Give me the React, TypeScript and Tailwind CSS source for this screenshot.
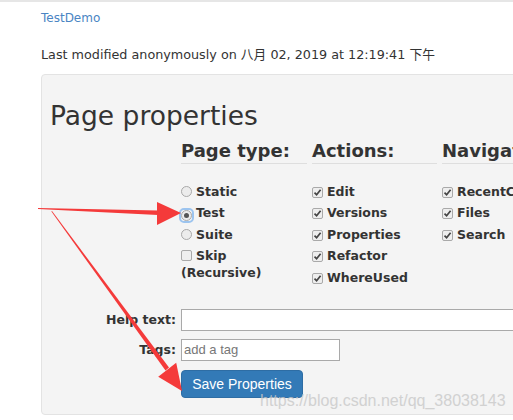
import React from 'react';

function Radio({ checked = false, focused = false }: { checked?: boolean; focused?: boolean }) {
  return (
    <span
      className={`inline-flex items-center justify-center align-[-1px] mr-[4px] w-[11px] h-[11px] rounded-[3px] ${
        focused ? 'outline outline-2 outline-[#9cc4ef]' : ''
      }`}
    >
      <span className="flex items-center justify-center w-[11px] h-[11px] rounded-full border border-[#a9a9a9] bg-[#ececec]">
        {checked && <span className="w-[5px] h-[5px] rounded-full bg-[#555]" />}
      </span>
    </span>
  );
}

function Check({ checked = true }: { checked?: boolean }) {
  return (
    <span className="inline-flex items-center justify-center align-[-1px] mr-[4px] w-[11px] h-[11px] rounded-[2px] border border-[#a9a9a9] bg-[#eeeeee]">
      {checked && (
        <svg width="9" height="9" viewBox="0 0 9 9">
          <path d="M1.5 4.6 L3.6 6.8 L7.6 1.8" fill="none" stroke="#444" strokeWidth="1.7" />
        </svg>
      )}
    </span>
  );
}

const heading = 'text-[18px] leading-[22px] font-bold text-[#333] pb-[1px] border-b border-[#dedede]';
const item = 'text-[12.5px] leading-[17px] font-bold text-[#333]';

export default function App() {
  return (
    <div
      className="relative w-[513px] h-[420px] overflow-hidden bg-white border-t-2 border-[#e6e6e6] text-[#333]"
      style={{ fontFamily: '"DejaVu Sans", Verdana, "Noto Sans CJK SC", sans-serif' }}
    >
      <div className="pl-[41px]">
        <a className="block mt-[7px] text-[12px] leading-[18px] text-[#4a85c3]">TestDemo</a>
        <p className="mt-[19px] text-[12.75px] leading-[18px] text-[#333]">
          Last modified anonymously on 八月 02, 2019 at 12:19:41 下午
        </p>

        {/* properties panel */}
        <div className="mt-[10px] w-[620px] h-[341px] rounded-[4px] border border-[#e3e3e3] bg-[#f4f4f4] pl-[8px] pt-[25px]">
          <h1 className="text-[26.5px] leading-[32px] font-normal text-[#333]">Page properties</h1>

          <div className="flex mt-[8px]">
            <div className="w-[131px] shrink-0" />
            <div className="flex gap-[5px]">
              <div className="w-[126px]">
                <div className={heading}>Page type:</div>
                <div className="mt-[18.5px] flex flex-col gap-[4.5px]">
                  <div className={item}><Radio />Static</div>
                  <div className={item}><Radio checked focused />Test</div>
                  <div className={item}><Radio />Suite</div>
                  <div className={item}><Check checked={false} />Skip (Recursive)</div>
                </div>
              </div>
              <div className="w-[125px]">
                <div className={heading}>Actions:</div>
                <div className="mt-[18.5px] flex flex-col gap-[4.5px]">
                  {['Edit', 'Versions', 'Properties', 'Refactor', 'WhereUsed'].map((t) => (
                    <div key={t} className={item}><Check />{t}</div>
                  ))}
                </div>
              </div>
              <div className="w-[130px]">
                <div className={heading}>Navigation:</div>
                <div className="mt-[18.5px] flex flex-col gap-[4.5px]">
                  {['RecentChanges', 'Files', 'Search'].map((t) => (
                    <div key={t} className={`${item} whitespace-nowrap`}><Check />{t}</div>
                  ))}
                </div>
              </div>
            </div>
          </div>

          <div className="mt-[23.5px] flex items-center gap-[5px]">
            <label className="w-[126px] shrink-0 text-right text-[12.5px] font-bold text-[#333]">Help text:</label>
            <div className="w-[400px] h-[22px] border border-[#a9a9a9] bg-white" />
          </div>
          <div className="mt-[8px] flex items-center gap-[5px]">
            <label className="w-[126px] shrink-0 text-right text-[12.5px] font-bold text-[#333]">Tags:</label>
            <div
              className="w-[159px] h-[22px] border border-[#a9a9a9] bg-white pl-[2px] text-[13px] leading-[20px] text-[#777]"
              style={{ fontFamily: '"Liberation Sans", Arial, sans-serif' }}
            >
              add a tag
            </div>
          </div>
          <div className="mt-[9px] flex gap-[5px]">
            <div className="w-[126px] shrink-0" />
            <button
              className="w-[122px] h-[28px] rounded-[4px] bg-[#337ab7] border border-[#2e6da4] text-white text-[14px]"
              style={{ fontFamily: '"Liberation Sans", Arial, sans-serif' }}
            >
              Save Properties
            </button>
          </div>
        </div>
      </div>

      {/* annotation arrows */}
      <svg className="absolute left-0 top-0 pointer-events-none" width="513" height="420" viewBox="0 0 513 420">
        <polygon points="38,206 158,208.5 158,213 38,207" fill="#f43a3a" />
        <polygon points="157,200 181,211 157,223" fill="#f43a3a" />
        <polygon points="52,209 169,365.5 165.5,368.5 51.4,209.6" fill="#f43a3a" />
        <polygon points="176.2,360.8 182,389 158.2,374.8" fill="#f43a3a" />
      </svg>

      <div
        className="absolute left-[260px] top-[389px] text-[16px] leading-[20px] text-[#c9c9c9] opacity-80 pointer-events-none"
        style={{ fontFamily: '"Liberation Sans", Arial, sans-serif' }}
      >
        https://blog.csdn.net/qq_38038143
      </div>
    </div>
  );
}
